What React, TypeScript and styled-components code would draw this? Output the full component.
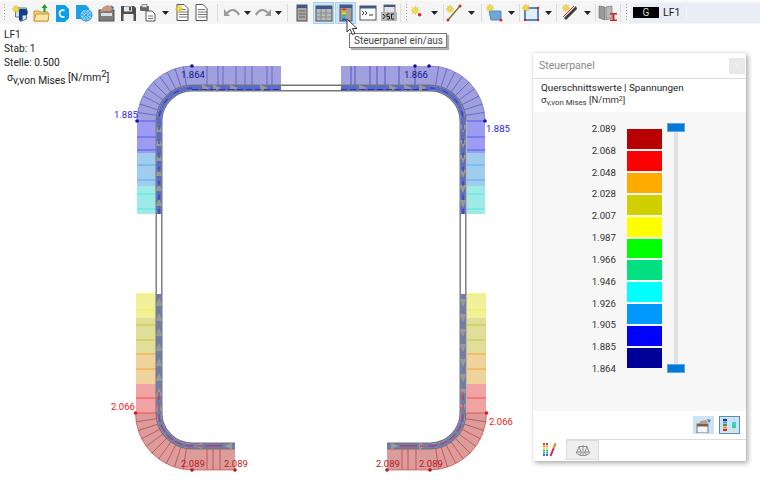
import React from "react";
import styled, { createGlobalStyle } from "styled-components";

const Global = createGlobalStyle`
  html, body { margin: 0; padding: 0; width: 760px; height: 493px; overflow: hidden; background: #fff; }
  body { font-family: Roboto, "Open Sans", sans-serif; color: #222; }
`;

const Page = styled.div`
  position: relative;
  width: 760px;
  height: 493px;
  display: flex;
  flex-direction: column;
  overflow: hidden;
`;

const Toolbar = styled.div`
  height: 24px;
  flex: none;
  display: flex;
  align-items: center;
  background: #f5f5f5;
  border-top: 1px solid #fbfbfb;
  box-sizing: border-box;
`;

const ToolSlot = styled.div<{ $w: number; $active?: boolean }>`
  width: ${(p) => p.$w}px;
  height: 22px;
  flex: none;
  display: flex;
  align-items: center;
  justify-content: center;
  box-sizing: border-box;
  background: ${(p) => (p.$active ? "#cce4f7" : "transparent")};
  border: ${(p) => (p.$active ? "1px solid #a8d2f2" : "none")};
`;

const ToolSep = styled.div<{ $w: number }>`
  width: ${(p) => p.$w}px;
  height: 18px;
  flex: none;
  display: flex;
  justify-content: center;
  &::after { content: ""; width: 1px; height: 100%; background: #dcdcdc; }
`;

const Gap = styled.div<{ $w: number }>`
  width: ${(p) => p.$w}px;
  flex: none;
`;

const Grip = styled.div<{ $w: number }>`
  width: ${(p) => p.$w}px;
  height: 18px;
  flex: none;
  display: flex;
  justify-content: center;
  &::after { content: ""; width: 1px; height: 100%; background: repeating-linear-gradient(#a0a0a0 0 1px, transparent 1px 3px); }
`;

const LoadBox = styled.div`
  flex: 1;
  height: 20px;
  display: flex;
  align-items: center;
  gap: 4px;
  padding-left: 3px;
  background: #e9edf6;
  font-size: 10.500px;
  color: #222;
`;

const LoadTag = styled.div`
  width: 26px;
  height: 11px;
  background: #000;
  color: #ddd;
  font-size: 10px;
  line-height: 11px;
  text-align: center;
`;

const LoadSep = styled.div`
  width: 1px;
  height: 14px;
  background: #f5f6fa;
  margin-left: 2px;
`;

const Canvas = styled.main`
  position: relative;
  flex: 1;
  background: #fff;
`;

const Diagram = styled.svg`
  position: absolute;
  left: 0;
  top: 0;
  font-family: Roboto, "Open Sans", sans-serif;
`;

const Info = styled.div`
  position: relative;
  padding: 4px 0 0 4px;
  font-size: 10.200px;
  line-height: 14px;
  color: #222;
`;

const SigmaLine = styled.div`
  margin: 1px 0 0 3px;
  font-size: 10.500px;
  line-height: 14px;
  white-space: nowrap;
  sub { font-size: 10.200px; vertical-align: -3px; line-height: 0; }
  sup { font-size: 9.500px; vertical-align: 4px; line-height: 0; }
`;

const Tooltip = styled.div`
  position: absolute;
  left: 349px;
  top: 33px;
  height: 15px;
  width: 98px;
  box-sizing: border-box;
  padding-left: 4px;
  border: 1px solid #767676;
  background: #fff;
  box-shadow: 2px 2px 1px #b0b0b0;
  font-size: 10px;
  line-height: 13px;
  color: #444;
  white-space: nowrap;
  z-index: 4;
`;

const Cursor = styled.svg`
  position: absolute;
  left: 346px;
  top: 18px;
  z-index: 5;
`;

const Panel = styled.aside`
  position: absolute;
  left: 533px;
  top: 53px;
  width: 213px;
  height: 408px;
  background: #fff;
  box-shadow: 0 0 1px #bbb, 2px 2px 5px #a8a8a8;
  display: flex;
  flex-direction: column;
`;

const PanelTitle = styled.div`
  height: 26px;
  flex: none;
  display: flex;
  align-items: center;
  justify-content: space-between;
  padding: 0 1px 0 6px;
  box-sizing: border-box;
  border-bottom: 1px solid #dcdcdc;
  font-size: 10.500px;
  color: #8a8a8a;
`;

const CloseBtn = styled.div`
  width: 16px;
  height: 16px;
  background: #e8e8e8;
  color: #f6f6f6;
  font-size: 10px;
  line-height: 15px;
  text-align: center;
`;

const PanelHead = styled.div`
  height: 33px;
  flex: none;
  padding: 3px 0 0 8px;
  box-sizing: border-box;
  font-size: 9.900px;
  line-height: 12px;
  color: #222;
`;

const SubHead = styled.div`
  font-size: 9.500px;
  line-height: 12px;
  color: #333;
  sub { font-size: 7.800px; vertical-align: -2px; line-height: 0; }
  sup { font-size: 7px; vertical-align: 2.500px; line-height: 0; }
`;

const PanelBody = styled.div`
  flex: 1;
  background: #f7f7f7;
  display: grid;
  grid-template-columns: 83px 35px 22px;
  column-gap: 11px;
  padding: 17px 0 0 0;
`;

const Scale = styled.div`
  height: 250px;
  margin-top: -5px;
  display: flex;
  flex-direction: column;
  justify-content: space-between;
  align-items: flex-end;
  font-size: 9.700px;
  line-height: 10px;
  color: #333;
`;

const Bars = styled.div`
  height: 239px;
  display: flex;
  flex-direction: column;
  gap: 2px;
`;

const Bar = styled.div<{ $c: string }>`
  flex: 1;
  background: ${(p) => p.$c};
`;

const Slider = styled.div`
  position: relative;
  width: 18px;
  height: 250px;
  margin-top: -6px;
  margin-left: -6px;
`;

const Track = styled.div`
  position: absolute;
  left: 7px;
  top: 6px;
  width: 4px;
  height: 240px;
  background: #e0e1e1;
`;

const Thumb = styled.div<{ $bottom?: boolean }>`
  position: absolute;
  left: 0;
  ${(p) => (p.$bottom ? "bottom: 0;" : "top: 0;")}
  width: 18px;
  height: 9px;
  box-sizing: border-box;
  background: #0078d7;
  border: 1px solid #5aa9e6;
`;

const PanelFoot = styled.div`
  height: 28px;
  flex: none;
  display: flex;
  justify-content: flex-end;
  align-items: center;
  gap: 5px;
  padding-right: 6px;
  box-sizing: border-box;
`;

const FootBtn = styled.div<{ $on?: boolean }>`
  width: 21px;
  height: 18px;
  box-sizing: border-box;
  display: flex;
  align-items: center;
  justify-content: center;
  background: #cce4f7;
  border: ${(p) => (p.$on ? "1px solid #5a8ab0" : "none")};
`;

const Tabs = styled.div`
  height: 22px;
  flex: none;
  display: flex;
  border-top: 1px solid #dcdcdc;
  box-sizing: border-box;
`;

const Tab = styled.div<{ $active?: boolean }>`
  width: 33px;
  height: ${(p) => (p.$active ? "21px" : "20px")};
  margin-top: ${(p) => (p.$active ? "-1px" : "0")};
  box-sizing: border-box;
  display: flex;
  align-items: center;
  justify-content: center;
  background: ${(p) => (p.$active ? "#fff" : "#eeeeee")};
  border: ${(p) => (p.$active ? "none" : "1px solid #dcdcdc")};
`;

/* ---------- toolbar icons ---------- */
const Ico: React.FC<{ children: React.ReactNode; w?: number; h?: number }> = ({ children, w = 18, h = 18 }) => (
  <svg width={w} height={h} viewBox={`0 0 ${w} ${h}`}>{children}</svg>
);
const Star = ({ x = 4, y = 4, r = 4 }) => {
  const pts = Array.from({ length: 16 }, (_, i) => {
    const a = (i * Math.PI) / 8;
    const q = i % 2 ? r * 0.45 : r;
    return `${x + q * Math.cos(a)},${y + q * Math.sin(a)}`;
  }).join(" ");
  return <polygon points={pts} fill="#f7e23a" stroke="#c9a92a" strokeWidth=".4" />;
};
const Caret = () => (
  <svg width="7" height="4" viewBox="0 0 7 4"><path d="M0 0H7L3.500 4Z" fill="#222" /></svg>
);
const DocLines = ({ x = 4, y = 1 }) => (
  <g>
    <path d={`M${x} ${y}h7l4 4v12h-11z`} fill="#fff" stroke="#555" />
    <path d={`M${x + 2} ${y + 5}h7M${x + 2} ${y + 7.500}h9M${x + 2} ${y + 10}h9M${x + 2} ${y + 12.500}h9`} stroke="#777" />
  </g>
);
const IcoNew = () => (
  <Ico><path d="M4.500 4h11v11l-6 2.500-1-4.500H4.500z" fill="#cfe0ef" stroke="#5d7894" /><path d="M8 5h5.500a2.800 2.800 0 0 1 0 6.500H11.500v5h-3.500z" fill="#123e88" /><Star x={5} y={5} /></Ico>
);
const IcoOpen = () => (
  <Ico><path d="M2 7h5l1 1h8v9H2z" fill="#f3d27a" stroke="#c79b3c" /><path d="M2 17l2-7h13l-1 7z" fill="#f9e5a5" stroke="#c79b3c" /><path d="M11.500 8V4H9.500L12.500 0l3 4h-2v4z" fill="#1f9a3c" /></Ico>
);
const IcoC = () => (
  <Ico><path d="M3 1h9l4 4v9l-4 4H3z" fill="#0a9fe6" /><path d="M11.500 6.500A3.400 3.400 0 1 0 11.500 12.500" fill="none" stroke="#fff" strokeWidth="1.800" /></Ico>
);
const IcoFlower = () => (
  <Ico><path d="M1 1h10l3 3v3H8v8H1z" fill="#1aa0e8" /><circle cx="11" cy="11" r="6" fill="#7fd0f4" stroke="#1a8fd6" /><circle cx="11" cy="11" r="2" fill="#fff" /><path d="M11 6v10M6 11h10M7.500 7.500l7 7M14.500 7.500l-7 7" stroke="#1a8fd6" strokeWidth=".8" /></Ico>
);
const IcoCase = () => (
  <Ico><rect x="2" y="6" width="15" height="11" fill="#7c7c7c" stroke="#555" /><rect x="4" y="9" width="11" height="3" fill="#ddd" /><path d="M3 8L6 3l5-2 5 3-2 3H7z" fill="#c99a74" /><path d="M13 1l4 2-1 3z" fill="#3a78c0" /></Ico>
);
const IcoSave = () => (
  <Ico><path d="M2 2h13l2 2v13H2z" fill="#4e4e4e" /><rect x="5" y="2.500" width="8" height="5" fill="#e8e8e8" /><rect x="10" y="3" width="2" height="3.500" fill="#4e4e4e" /><rect x="4.500" y="10" width="10" height="7" fill="#f0f0f0" /></Ico>
);
const IcoPrint = () => (
  <Ico><rect x="1" y="2" width="9" height="5" rx="1" fill="#666" /><rect x="3" y="0.500" width="5" height="3" fill="#ddd" stroke="#666" strokeWidth=".6" /><path d="M7 7h6l3 3v7H7z" fill="#fff" stroke="#555" /><path d="M9 12h5M9 14.500h5" stroke="#777" /></Ico>
);
const IcoDocStar = () => (<Ico><DocLines x={3} y={0.5} /><Star x={5} y={5} /></Ico>);
const IcoDoc = () => (<Ico><DocLines x={2} y={0.5} /></Ico>);
const IcoUndo = () => (
  <Ico h={12}><path d="M4 6C8 1.500 13 2 16 8" fill="none" stroke="#9a9a9a" strokeWidth="2.200" /><path d="M1 2v7h6z" fill="#9a9a9a" /></Ico>
);
const IcoRedo = () => (
  <Ico h={12}><path d="M14 6C10 1.500 5 2 2 8" fill="none" stroke="#9a9a9a" strokeWidth="2.200" /><path d="M17 2v7h-6z" fill="#9a9a9a" /></Ico>
);
const IcoCol = () => (
  <Ico><rect x="4" y="1" width="10" height="16" fill="#a8a8a8" stroke="#4e4e4e" /><rect x="4" y="1" width="10" height="3" fill="#3c5a90" /><path d="M6 7h6M6 10h6M6 13h6" stroke="#666" /></Ico>
);
const IcoTable = () => (
  <Ico><rect x="1" y="2" width="16" height="15" fill="#b9b9b9" stroke="#4e4e4e" /><rect x="1" y="2" width="16" height="3" fill="#3c5a90" /><path d="M6 5v12M11 5v12M2 9h14M2 13h14" stroke="#8a8a8a" /></Ico>
);
const IcoPanel = () => (
  <Ico><rect x="3" y="1" width="12" height="16" fill="#a0a0a0" stroke="#555" /><rect x="3" y="1" width="12" height="3" fill="#3c5a90" />
    {["#d9382b", "#f0a030", "#e4e040", "#42c04a", "#30b0e0", "#3050d0"].map((c, i) => <rect key={c} x="5" y={4.500 + i * 2} width="4" height="2" fill={c} />)}
  </Ico>
);
const IcoConsole = () => (
  <Ico><rect x="1" y="2" width="16" height="14" fill="#fff" stroke="#555" /><rect x="1" y="2" width="16" height="2.500" fill="#3c5a90" /><path d="M3 7l2 2-2 2M6 7l2 2-2 2M10 11h4" fill="none" stroke="#333" /></Ico>
);
const IcoScript = () => (
  <Ico><rect x="4" y="1" width="11" height="8" fill="#e4e4e4" stroke="#777" /><rect x="4" y="1" width="11" height="2" fill="#3c5a90" /><rect x="1" y="8" width="16" height="9" rx="1" fill="#b4b4b4" /><path d="M3 10l2 2.500-2 2.500M7 15h2.500v-2.500H7V10h2.500M14 10h-2.500v5H14" fill="none" stroke="#222" strokeWidth="1" /></Ico>
);
const IcoPoint = () => (<Ico><Star x={7} y={6} r={5} /><circle cx="12" cy="11" r="2" fill="#d8262c" /></Ico>);
const IcoLine = () => (
  <Ico><path d="M15 2L3 16" stroke="#7a7a30" strokeWidth="1.500" /><Star x={5} y={5} /><circle cx="15" cy="2" r="1.500" fill="#d8262c" /><circle cx="3" cy="16" r="1.500" fill="#d8262c" /></Ico>
);
const IcoArea = () => (
  <Ico><path d="M4 7h12v9H6z" fill="#6ea6d8" stroke="#5b8ab8" /><Star x={5} y={4} /><circle cx="16" cy="16" r="1.500" fill="#d8262c" /></Ico>
);
const IcoFrame = () => (
  <Ico><rect x="3" y="4" width="13" height="12" fill="#e4eef8" stroke="#2f6fb0" strokeWidth="1.600" /><Star x={4} y={4} />
    <circle cx="16" cy="4" r="1.300" fill="#d8262c" /><circle cx="3" cy="16" r="1.300" fill="#d8262c" /><circle cx="16" cy="16" r="1.300" fill="#d8262c" /></Ico>
);
const IcoBeam = () => (
  <Ico><path d="M16 2L4 14l2 2L17 5z" fill="#3a3a3a" /><path d="M14 2L3 13" stroke="#d8262c" strokeWidth="1" /><Star x={6} y={4} /></Ico>
);
const IcoBook = () => (
  <Ico w={20}><path d="M1 2l6 1v13l-6-2z" fill="#9a9a9a" stroke="#666" strokeWidth=".6" /><path d="M14 2l-6 1v13l6-2z" fill="#b8b8b8" stroke="#666" strokeWidth=".6" /><path d="M12 9h7v1.500h-2.500v5H19V17h-7v-1.500h2.500v-5H12z" fill="#c82a2a" /></Ico>
);
const IcoPalette = () => (
  <svg width="14" height="14" viewBox="0 0 14 14">
    {["#d8262c", "#f0a030", "#e4e040", "#42c04a", "#30b0e0", "#3050d0"].map((c, i) => (
      <g key={c}><rect x="0" y={i * 2.200} width="2" height="1.800" fill={c} /><rect x="3" y={i * 2.200} width="2" height="1.800" fill={c} /></g>
    ))}
    <path d="M12.500 0.500L7.500 13" stroke="#d02060" strokeWidth="2" />
    <path d="M12.500 0.500l-2 5" stroke="#e8a020" strokeWidth="2" />
  </svg>
);
const IcoScales = () => (
  <svg width="14" height="13" viewBox="0 0 14 13" fill="none" stroke="#777" strokeWidth=".8">
    <path d="M7 1v10M3.500 11.500h7M3 2.500h8M3 2.500L1 8M3 2.500L5 8M11 2.500L9 8M11 2.500L13 8" />
    <path d="M0.500 8a2.500 2.500 0 0 0 5 0zM8.500 8a2.500 2.500 0 0 0 5 0z" />
  </svg>
);
const IcoPicker = () => (
  <svg width="17" height="15" viewBox="0 0 17 15">
    <rect x="2" y="6" width="11" height="9" fill="#f4f4f4" stroke="#777" /><rect x="2" y="6" width="11" height="2.500" fill="#666" />
    <path d="M3 6l3-3 5-1 2 2-2 2z" fill="#c99a74" /><path d="M12 1l4 1-2 3z" fill="#4a88c8" />
  </svg>
);
const IcoRanges = () => (
  <svg width="17" height="14" viewBox="0 0 17 14">
    <rect x="3" y="0" width="2" height="14" fill="#d8d8d8" /><rect x="12" y="0" width="2" height="14" fill="#d8d8d8" />
    {["#1030c0", "#30a0e0", "#808040", "#e0a030", "#d8262c"].map((c, i) => <rect key={c} x="2" y={1 + i * 2.500} width="4" height="2" fill={c} />)}
    {["#40d0e0", "#20e0c0", "#40d080"].map((c, i) => <rect key={c} x="11" y={4 + i * 2} width="4" height="2" fill={c} />)}
  </svg>
);

type Item =
  | { k: "i"; w: number; el: React.ReactNode; active?: boolean }
  | { k: "c"; w: number }
  | { k: "s"; w: number }
  | { k: "b"; w: number }
  | { k: "g"; w: number };

const items: Item[] = [
  { k: "g", w: 9 },
  { k: "i", w: 22, el: <IcoNew /> }, { k: "i", w: 20, el: <IcoOpen /> }, { k: "i", w: 22, el: <IcoC /> },
  { k: "i", w: 22, el: <IcoFlower /> }, { k: "i", w: 22, el: <IcoCase /> }, { k: "i", w: 21, el: <IcoSave /> },
  { k: "i", w: 20, el: <IcoPrint /> }, { k: "c", w: 14 }, { k: "i", w: 22, el: <IcoDocStar /> }, { k: "i", w: 18, el: <IcoDoc /> },
  { k: "s", w: 10 },
  { k: "i", w: 19, el: <IcoUndo /> }, { k: "c", w: 12 }, { k: "i", w: 19, el: <IcoRedo /> }, { k: "c", w: 12 },
  { k: "s", w: 7 },
  { k: "i", w: 21, el: <IcoCol /> }, { k: "b", w: 1 },
  { k: "i", w: 21, el: <IcoTable />, active: true }, { k: "b", w: 1 }, { k: "i", w: 21, el: <IcoPanel />, active: true },
  { k: "i", w: 23, el: <IcoConsole /> }, { k: "i", w: 19, el: <IcoScript /> },
  { k: "s", w: 5 }, { k: "g", w: 6 },
  { k: "i", w: 16, el: <IcoPoint /> }, { k: "c", w: 18 }, { k: "s", w: 1 }, { k: "i", w: 19, el: <IcoLine /> }, { k: "c", w: 17 },
  { k: "s", w: 3 }, { k: "i", w: 22, el: <IcoArea /> }, { k: "c", w: 12 }, { k: "s", w: 4 },
  { k: "i", w: 20, el: <IcoFrame /> }, { k: "c", w: 14 }, { k: "s", w: 3 },
  { k: "i", w: 22, el: <IcoBeam /> }, { k: "c", w: 14 }, { k: "s", w: 3 },
  { k: "i", w: 21, el: <IcoBook /> }, { k: "s", w: 5 }, { k: "g", w: 7 },
];

/* ---------- stress diagram ---------- */
type Seg = { y0: number; y1: number; fill: string; line: string; ticks: number[] };

const upperSegs: Seg[] = [
  { y0: 121, y1: 153, fill: "#9c9cf2", line: "#5656f0", ticks: [121, 137, 150] },
  { y0: 153, y1: 186, fill: "#a0cdee", line: "#52aef0", ticks: [165, 180] },
  { y0: 186, y1: 214, fill: "#9eeae6", line: "#52e8e0", ticks: [194, 209] },
];
const lowerSegs: Seg[] = [
  { y0: 294, y1: 318, fill: "#f1f19c", line: "#f2f240", ticks: [294, 310] },
  { y0: 318, y1: 353, fill: "#dfdf98", line: "#c8c834", ticks: [325, 340] },
  { y0: 353, y1: 384, fill: "#f0d29c", line: "#f2aa34", ticks: [354, 369] },
  { y0: 384, y1: 413, fill: "#f1a2a2", line: "#f05050", ticks: [398, 413] },
];

const radial = (cx: number, cy: number, r0: number, r1: number, from: number, to: number, n: number) =>
  Array.from({ length: n }, (_, i) => {
    const a = ((from + ((to - from) * (i + 1)) / (n + 1)) * Math.PI) / 180;
    return `M${cx + r0 * Math.cos(a)} ${cy + r0 * Math.sin(a)}L${cx + r1 * Math.cos(a)} ${cy + r1 * Math.sin(a)}`;
  }).join("");

const Side: React.FC<{ segs: Seg[]; x0: number; x1: number }> = ({ segs, x0, x1 }) => (
  <>
    {segs.map((s) => (
      <g key={s.y0}>
        <rect x={x0} y={s.y0} width={x1 - x0} height={s.y1 - s.y0} fill={s.fill} />
        {s.ticks.map((t) => <line key={t} x1={x0} x2={x1} y1={t} y2={t} stroke={s.line} />)}
      </g>
    ))}
  </>
);

const Dot: React.FC<{ x: number; y: number; c: string }> = ({ x, y, c }) => <circle cx={x} cy={y} r={1.800} fill={c} />;

const arrowsV = (x: number, ys: number[], dir: 1 | -1) =>
  ys.map((y) => <path key={`${x}-${y}`} d={`M${x - 3.500} ${y}h7l-3.500 ${-8 * dir}z`} fill="#999" />);
const arrowsH = (y: number, xs: number[], dir: 1 | -1) =>
  xs.map((x) => <path key={`${x}-${y}`} d={`M${x} ${y - 3.500}v7l${8 * dir} -3.500z`} fill="#999" />);

const SECTION = "M235 446H192A33 33 0 0 1 159 413V121A33 33 0 0 1 192 88H430A33 33 0 0 1 463 121V413A33 33 0 0 1 430 446H387";

const StressDiagram = () => (
  <Diagram width={760} height={469} viewBox="0 24 760 469">
    {/* upper left */}
    <path d="M137 121A55 55 0 0 1 192 66H281V90H192A31 31 0 0 0 161 121Z" fill="#a0a0de" />
    <path d={radial(192, 121, 35, 55, 180, 270, 9)} stroke="#5050c8" strokeWidth=".7" />
    <path d="M207 66V88M218 66V88M223 66V88M236 66V88M245 66V88M252 66V88M267 66V88M272 66V88" stroke="#5050c8" strokeWidth=".7" />
    <path d="M137 121A55 55 0 0 1 192 66" fill="none" stroke="#6a6ad0" strokeWidth=".7" />
    <Side segs={upperSegs} x0={137} x1={156} />
    {/* upper right */}
    <path d="M485 121A55 55 0 0 0 430 66H341V90H430A31 31 0 0 1 461 121Z" fill="#a0a0de" />
    <path d={radial(430, 121, 35, 55, -90, 0, 9)} stroke="#5050c8" strokeWidth=".7" />
    <path d="M351 66V88M355 66V88M370 66V88M377 66V88M385 66V88M399 66V88M415 66V88" stroke="#3434c0" strokeWidth=".7" />
    <path d="M485 121A55 55 0 0 0 430 66" fill="none" stroke="#6a6ad0" strokeWidth=".7" />
    <Side segs={upperSegs} x0={467} x1={485} />
    {/* lower left */}
    <path d="M135.500 413A57 57 0 0 0 192 470H235V449H192A33 33 0 0 1 159 413Z" fill="#dc9c9c" />
    <path d={radial(192, 413, 35, 57, 90, 180, 9)} stroke="#bd3a3a" strokeWidth=".7" />
    <path d="M207 449V470M213 449V470M220 449V470" stroke="#bd3a3a" strokeWidth=".7" />
    <path d="M135.500 413A57 57 0 0 0 192 470H235" fill="none" stroke="#c85050" strokeWidth=".7" />
    <Side segs={lowerSegs} x0={136} x1={156} />
    {/* lower right */}
    <path d="M486.500 413A57 57 0 0 1 430 470H387V449H430A33 33 0 0 0 463 413Z" fill="#dc9c9c" />
    <path d={radial(430, 413, 35, 57, 0, 90, 9)} stroke="#bd3a3a" strokeWidth=".7" />
    <path d="M402 449V470M408 449V470M416 449V470" stroke="#bd3a3a" strokeWidth=".7" />
    <path d="M486.500 413A57 57 0 0 1 430 470H387" fill="none" stroke="#c85050" strokeWidth=".7" />
    <Side segs={lowerSegs} x0={467} x1={486} />

    {/* cross-section */}
    <path d={SECTION} fill="none" stroke="#757575" strokeWidth="7" />
    <path d={SECTION} fill="none" stroke="#fff" strokeWidth="4.200" />
    <g fill="none" strokeWidth="4.400">
      <path d="M159 214V121A33 33 0 0 1 192 88H281" stroke="#5a6cc8" />
      <path d="M463 214V121A33 33 0 0 0 430 88H341" stroke="#5a6cc8" />
      <path d="M159 294V413A33 33 0 0 0 192 446H235" stroke="#6f7cb0" />
      <path d="M463 294V413A33 33 0 0 1 430 446H387" stroke="#6f7cb0" />
    </g>
    {arrowsV(159, [132, 146, 161, 176, 191, 206], 1)}
    {arrowsV(463, [125, 140, 155, 170, 185, 200], -1)}
    {arrowsV(159, [306, 321, 336, 351, 366, 381, 396, 411], 1)}
    {arrowsV(463, [299, 314, 329, 344, 359, 374, 389, 404], -1)}
    {arrowsH(88, [202, 213, 230, 260], 1)}
    {arrowsH(88, [359, 389, 404, 419], 1)}
    {arrowsH(446, [202, 232], -1)}
    {arrowsH(446, [391, 419], 1)}
    <g fill="none" strokeWidth="1">
      <path d="M159 214V121A33 33 0 0 1 192 88" stroke="#1c30d8" strokeDasharray="5 9" />
      <path d="M463 214V121A33 33 0 0 0 430 88" stroke="#1c30d8" strokeDasharray="5 9" />
      <path d="M192 89.500H281M341 89.500H430" stroke="#1c30d8" strokeDasharray="6 3" />
      <path d="M159 392V413A33 33 0 0 0 192 446H202" stroke="#d02060" strokeDasharray="8 3" />
      <path d="M463 392V413A33 33 0 0 1 430 446H420" stroke="#d02060" strokeDasharray="8 3" />
      <path d="M205 446H222M400 446H417" stroke="#d8203c" />
    </g>

    {/* points and values */}
    <Dot x={192} y={66} c="#10109a" /><Dot x={415} y={66} c="#10109a" /><Dot x={429} y={66} c="#10109a" />
    <Dot x={137} y={121} c="#1010c8" /><Dot x={485} y={121} c="#1010c8" />
    <Dot x={135.500} y={413} c="#e01818" /><Dot x={486.500} y={413} c="#e01818" />
    <Dot x={192} y={470} c="#b01818" /><Dot x={235} y={470} c="#b01818" /><Dot x={387} y={470} c="#b01818" /><Dot x={430} y={470} c="#b01818" />
    <g fontSize="9.500">
      <text x="181" y="78" fill="#14148c">1.864</text>
      <text x="404" y="78" fill="#14148c">1.866</text>
      <text x="114" y="118" fill="#2222ee">1.885</text>
      <text x="486" y="132" fill="#2222ee">1.885</text>
      <text x="111" y="410" fill="#ee2020">2.066</text>
      <text x="489" y="425" fill="#ee2020">2.066</text>
      <text x="181" y="467" fill="#b82020">2.089</text>
      <text x="224" y="467" fill="#b82020">2.089</text>
      <text x="376" y="467" fill="#b82020">2.089</text>
      <text x="419" y="467" fill="#b82020">2.089</text>
    </g>
  </Diagram>
);

const scale = ["2.089", "2.068", "2.048", "2.028", "2.007", "1.987", "1.966", "1.946", "1.926", "1.905", "1.885", "1.864"];
const colors = ["#b80000", "#ff0000", "#ffaa00", "#d0d000", "#ffff00", "#00ff00", "#00e080", "#00ffff", "#0099ff", "#0000ff", "#000099"];

export default function App() {
  return (
    <Page>
      <Global />
      <Toolbar>
        {items.map((it, i) => {
          if (it.k === "g") return <Grip key={i} $w={it.w} />;
          if (it.k === "s") return <ToolSep key={i} $w={it.w} />;
          if (it.k === "b") return <Gap key={i} $w={it.w} />;
          if (it.k === "c") return <ToolSlot key={i} $w={it.w}><Caret /></ToolSlot>;
          return <ToolSlot key={i} $w={it.w} $active={it.active}>{it.el}</ToolSlot>;
        })}
        <LoadBox>
          <LoadTag>G</LoadTag>
          LF1
          <LoadSep />
        </LoadBox>
      </Toolbar>
      <Canvas>
        <StressDiagram />
        <Info>
          <div>LF1</div>
          <div>Stab: 1</div>
          <div>Stelle: 0.500</div>
          <SigmaLine>σ<sub>v,von Mises</sub> [N/mm<sup>2</sup>]</SigmaLine>
        </Info>
      </Canvas>
      <Tooltip>Steuerpanel ein/aus</Tooltip>
      <Cursor width="13" height="18" viewBox="0 0 13 18">
        <path d="M1 1v13l3-3 2.500 5.500 2.500-1L6.500 10.500H11z" fill="#fff" stroke="#333" strokeWidth="1" />
      </Cursor>
      <Panel>
        <PanelTitle>
          Steuerpanel
          <CloseBtn>×</CloseBtn>
        </PanelTitle>
        <PanelHead>
          Querschnittswerte | Spannungen
          <SubHead>σ<sub>v,von Mises</sub> [N/mm<sup>2</sup>]</SubHead>
        </PanelHead>
        <PanelBody>
          <Scale>{scale.map((s) => <div key={s}>{s}</div>)}</Scale>
          <Bars>{colors.map((c) => <Bar key={c} $c={c} />)}</Bars>
          <Slider><Track /><Thumb /><Thumb $bottom /></Slider>
        </PanelBody>
        <PanelFoot>
          <FootBtn><IcoPicker /></FootBtn>
          <FootBtn $on><IcoRanges /></FootBtn>
        </PanelFoot>
        <Tabs>
          <Tab $active><IcoPalette /></Tab>
          <Tab><IcoScales /></Tab>
        </Tabs>
      </Panel>
    </Page>
  );
}
